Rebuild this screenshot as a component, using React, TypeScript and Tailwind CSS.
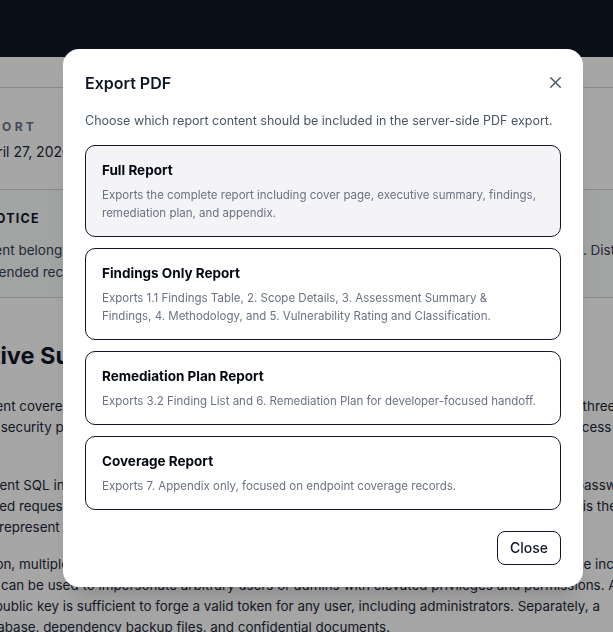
import { X, ShieldAlert } from "lucide-react";

const options = [
  {
    title: "Full Report",
    desc: "Exports the complete report including cover page, executive summary, findings, remediation plan, and appendix.",
    active: true,
  },
  {
    title: "Findings Only Report",
    desc: "Exports 1.1 Findings Table, 2. Scope Details, 3. Assessment Summary & Findings, 4. Methodology, and 5. Vulnerability Rating and Classification.",
  },
  {
    title: "Remediation Plan Report",
    desc: "Exports 3.2 Finding List and 6. Remediation Plan for developer-focused handoff.",
  },
  {
    title: "Coverage Report",
    desc: "Exports 7. Appendix only, focused on endpoint coverage records.",
  },
];

function ReportPage() {
  return (
    <div className="min-h-screen overflow-hidden bg-white">
      <header className="h-[57px] bg-[#111827]" />
      <div className="h-[31px] border-b border-gray-300" />
      <div className="-ml-[76px] w-[1100px]">
        {/* cover */}
        <section className="border-b border-gray-300 pb-[26px] pl-[45px] pt-[31px]">
          <div className="text-[12px] font-bold uppercase leading-4 tracking-[0.28em] text-gray-500">Report</div>
          <div className="ml-[10px] mt-[6px] text-[14px] leading-[22px] text-gray-800">April 27, 2026</div>
        </section>

        {/* notice */}
        <section className="border-b border-gray-300 bg-gray-50 pb-[14px] pl-[25px] pt-[20px]">
          <div className="ml-[12px] flex items-center gap-[6px]">
            <ShieldAlert size={18} className="text-gray-700" />
            <span className="text-[12.5px] font-bold uppercase leading-[18px] tracking-[0.1em] text-gray-900">Notice</span>
          </div>
          <div className="mt-[11px] whitespace-nowrap text-[13.5px] leading-[22px] text-gray-700">
            <div>Document belongs to Northwind Labs and contains sensitive security information for internal usage. Distribution</div>
            <div>to all intended recipients listed on the cover page of this assessment report.</div>
          </div>
        </section>

        {/* summary */}
        <section className="-ml-[12px] pt-[43px]">
          <h2 className="ml-[10px] text-[23.5px] font-bold leading-[30px] text-gray-900">Executive Summary</h2>
          <div className="mt-[25px] whitespace-nowrap text-[13.4px] leading-[21px] text-gray-800">
            <p>
              The assessment covered the customer portal, public REST APIs, and the administrative console across all three
              <br />
              reviewing the security posture, authentication and session handling, and data protection including their access
              <br />
              controls.
            </p>
            <p className="mt-[16px]">
              The independent SQL injection was identified within the login workflow that allows a complete bypass of password
              <br />
              By using crafted requests, an attacker can extract stored user credentials, and the whole business impact is the
              <br />
              so this would represent a full compromise of the application data.
            </p>
            <p className="mt-[16px]">
              After evaluation, multiple exposed configuration files and private signing keys were found, and two of these include
              <br />
              These tokens can be used to impersonate arbitrary users or admins with elevated privileges and permissions. A
              <br />
              Knowing the public key is sufficient to forge a valid token for any user, including administrators. Separately, a
              <br />
              inside the database, dependency backup files, and confidential documents.
            </p>
          </div>
        </section>
      </div>
    </div>
  );
}

export default function App() {
  return (
    <div className="font-['Inter',sans-serif]">
      <ReportPage />
      <div className="fixed inset-0 flex items-center justify-center bg-black/35 pl-[33px] pt-[3px]">
        <div className="w-[520px] rounded-2xl bg-white p-[22px] shadow-xl">
          <div className="flex items-center justify-between">
            <h2 className="text-[16px] font-semibold leading-6 text-gray-900">Export PDF</h2>
            <button className="-mr-[4px] text-gray-600">
              <X size={19} strokeWidth={1.75} />
            </button>
          </div>
          <p className="mt-4 text-[12.5px] leading-5 text-gray-600">
            Choose which report content should be included in the server-side PDF export.
          </p>
          <div className="mt-[14px] flex flex-col gap-[11px]">
            {options.map((o) => (
              <button
                key={o.title}
                className={`rounded-[10px] border border-gray-900 py-[14px] pl-4 pr-6 text-left ${
                  o.active ? "bg-[#f4f4f6]" : "bg-white"
                }`}
              >
                <div className="text-[13.5px] font-bold leading-5 text-gray-950">{o.title}</div>
                <div className="mt-[6px] text-[11.5px] leading-[18px] text-gray-500">{o.desc}</div>
              </button>
            ))}
          </div>
          <div className="mt-[21px] flex justify-end">
            <button className="h-[34px] rounded-lg border border-gray-900 px-3 text-[14px] font-medium text-gray-900">
              Close
            </button>
          </div>
        </div>
      </div>
    </div>
  );
}
